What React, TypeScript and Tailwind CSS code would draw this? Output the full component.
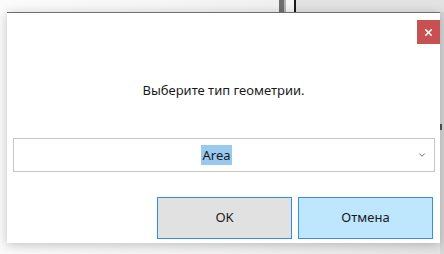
import { ChevronDown, X } from 'lucide-react';

const App = () => {
	return (
		<div
			className="relative w-[444px] h-[254px] overflow-hidden bg-gradient-to-r from-[#fafafa] via-[#f2f2f2] to-[#e4e4e4]"
			style={{ fontFamily: '"Noto Sans", "Open Sans", sans-serif' }}
		>
			{/* window behind the dialog */}
			<div className="absolute left-0 top-0 flex h-[12px] w-full">
				<div className="w-[279px] bg-gradient-to-r from-[#fbfbfb] to-[#f0f0f0]" />
				<div className="w-[5px] bg-[#6e6e6e]" />
				<div className="w-[2px] bg-[#b4b4b4]" />
				<div className="w-[8px] bg-[#f4f4f4]" />
				<div className="w-[2px] bg-[#1a1a1a]" />
				<div className="flex-1 bg-[#e2e2e2]" />
			</div>
			<div className="absolute right-0 top-[12px] h-full w-[4px] bg-[#d6d6d6]">
				<div className="mt-[112px] h-[6px] w-[2px] bg-[#555]" />
			</div>

			{/* dialog */}
			<div className="relative ml-[7px] mt-[12px] flex h-[231px] w-[433px] flex-col border-t border-[#707070] bg-white shadow-[0_2px_10px_rgba(0,0,0,0.22)]">
				<div className="flex justify-end pt-[7px]">
					<button className="flex h-[24px] w-[23px] items-center justify-center bg-[#c75050]">
						<X size={11} strokeWidth={3.5} color="#fff" />
					</button>
				</div>
				<p className="mt-[36px] text-center text-[13px] leading-[20px] text-[#1a1a1a]">
					Выберите тип геометрии.
				</p>
				<div className="mx-[6px] mt-[38px] flex h-[34px] w-[422px] items-center border border-[#c6c6c6] bg-white">
					<div className="flex flex-1 justify-center pl-[2px]">
						<span className="bg-[#99c9ef] px-[1px] text-[13px] leading-[20px] text-[#1a1a1a]">
							Area
						</span>
					</div>
					<ChevronDown size={10} strokeWidth={2} color="#555" className="mr-[7px]" />
				</div>
				<div className="mt-[25px] flex justify-end gap-[6px] pr-[7px]">
					<button className="h-[42px] w-[135px] border border-[#2f8ee6] bg-[#e1e1e1] text-[13px] text-[#1a1a1a]">
						OK
					</button>
					<button className="h-[42px] w-[135px] border border-[#3c8fd3] bg-[#bee6fd] text-[13px] text-[#1a1a1a]">
						Отмена
					</button>
				</div>
			</div>
		</div>
	);
};

export default App;
